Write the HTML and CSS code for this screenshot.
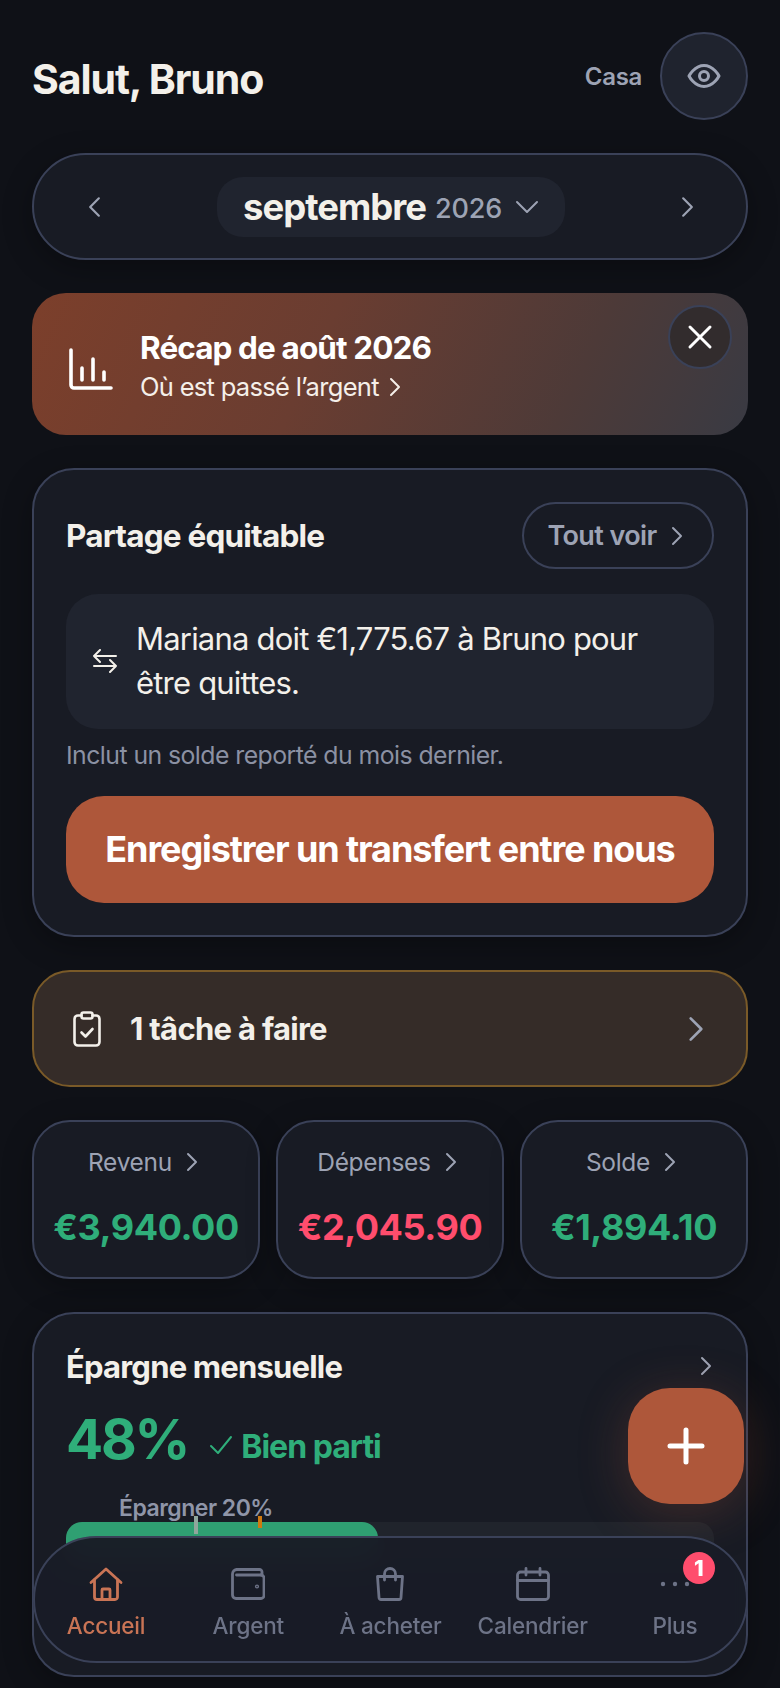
FILE: index.html
```html
<!DOCTYPE html>
<html lang="fr">
<head>
<meta charset="utf-8">
<title>Accueil</title>
<link rel="stylesheet" href="styles.css">
</head>
<body>
<svg class="defs" width="0" height="0">
  <symbol id="chev" viewBox="0 0 12 20"><path d="M2 2l8 8-8 8" fill="none" stroke="currentColor" stroke-width="2" stroke-linecap="round" stroke-linejoin="round"/></symbol>
</svg>
<main class="page">
  <header class="top">
    <h1 class="hello">Salut, Bruno</h1>
    <div class="top-right">
      <span class="casa">Casa</span>
      <button class="eye">
        <svg width="36" height="36" viewBox="0 0 24 24" fill="none" stroke="currentColor" stroke-width="2" stroke-linecap="round" stroke-linejoin="round"><path d="M2 12s3.600-7 10-7 10 7 10 7-3.600 7-10 7-10-7-10-7z"/><circle cx="12" cy="12" r="3"/></svg>
      </button>
    </div>
  </header>

  <section class="month">
    <svg class="m-chev flip"><use href="#chev"/></svg>
    <div class="m-pill">
      <span class="m-name">septembre</span>
      <span class="m-year">2026</span>
      <svg class="m-down" viewBox="0 0 24 14"><path d="M2 2l10 10L22 2" fill="none" stroke="currentColor" stroke-width="2" stroke-linecap="round" stroke-linejoin="round"/></svg>
    </div>
    <svg class="m-chev"><use href="#chev"/></svg>
  </section>

  <section class="recap">
    <svg class="recap-icon" viewBox="0 0 44 42" fill="none" stroke="currentColor" stroke-width="3.600" stroke-linecap="round" stroke-linejoin="round"><path d="M2 2v35a3 3 0 0 0 3 3h37"/><path d="M13 20v12M24 11v21M35 24v8"/></svg>
    <div class="recap-text">
      <div class="recap-title">Récap de août 2026</div>
      <div class="recap-sub">Où est passé l’argent <svg class="chev-s"><use href="#chev"/></svg></div>
    </div>
    <button class="close">
      <svg width="26" height="26" viewBox="0 0 26 26" fill="none" stroke="currentColor" stroke-width="3" stroke-linecap="round"><path d="M3 3l20 20M23 3L3 23"/></svg>
    </button>
  </section>

  <section class="card share">
    <div class="share-head">
      <h2 class="card-title">Partage équitable</h2>
      <button class="see-all">Tout voir <svg class="chev-s"><use href="#chev"/></svg></button>
    </div>
    <div class="owed">
      <svg class="owed-icon" viewBox="0 0 26 24" fill="none" stroke="currentColor" stroke-width="2" stroke-linecap="round" stroke-linejoin="round"><path d="M8 1L2 7l6 6M2 7h22M18 11l6 6-6 6M24 17H2"/></svg>
      <p class="owed-text">Mariana doit €1,775.67 à Bruno pour être quittes.</p>
    </div>
    <p class="note">Inclut un solde reporté du mois dernier.</p>
    <button class="cta">Enregistrer un transfert entre nous</button>
  </section>

  <section class="task">
    <svg class="task-icon" viewBox="0 0 28 36" fill="none" stroke="currentColor" stroke-width="2.600" stroke-linecap="round" stroke-linejoin="round"><rect x="8.500" y="1.500" width="11" height="6" rx="2"/><path d="M8.500 4.500H5a3.500 3.500 0 0 0-3.500 3.500v23A3.500 3.500 0 0 0 5 34.500h18a3.500 3.500 0 0 0 3.500-3.500V8A3.500 3.500 0 0 0 23 4.500h-3.500"/><path d="M8.500 21.500l4 4 7-7.500"/></svg>
    <span class="task-label">1 tâche à faire</span>
    <svg class="task-chev"><use href="#chev"/></svg>
  </section>

  <section class="stats">
    <div class="stat">
      <div class="stat-label">Revenu <svg class="chev-s"><use href="#chev"/></svg></div>
      <div class="stat-value green">€3,940.00</div>
    </div>
    <div class="stat">
      <div class="stat-label">Dépenses <svg class="chev-s"><use href="#chev"/></svg></div>
      <div class="stat-value red">€2,045.90</div>
    </div>
    <div class="stat">
      <div class="stat-label">Solde <svg class="chev-s"><use href="#chev"/></svg></div>
      <div class="stat-value green">€1,894.10</div>
    </div>
  </section>

  <section class="card savings">
    <div class="sav-head">
      <h2 class="card-title sav-title">Épargne mensuelle</h2>
      <svg class="chev-s"><use href="#chev"/></svg>
    </div>
    <div class="sav-main">
      <span class="sav-pct">48%</span>
      <svg class="sav-check" viewBox="0 0 24 20" fill="none" stroke="currentColor" stroke-width="2" stroke-linecap="round" stroke-linejoin="round"><path d="M2 11l7 7L22 2"/></svg>
      <span class="sav-status">Bien parti</span>
    </div>
    <div class="bar">
      <span class="goal-label">Épargner 20%</span>
      <div class="bar-fill"></div>
      <span class="mark mark-a"></span>
      <span class="mark mark-b"></span>
    </div>
  </section>
</main>

<button class="fab">
  <svg width="38" height="38" viewBox="0 0 38 38" fill="none" stroke="currentColor" stroke-width="5" stroke-linecap="round"><path d="M19 3v32M3 19h32"/></svg>
</button>

<nav class="nav">
  <a class="nav-item active">
    <svg class="nav-icon" viewBox="0 0 34 34" fill="none" stroke="currentColor" stroke-width="2.800" stroke-linecap="round" stroke-linejoin="round"><path d="M2 15.500L17 2l15 13.500"/><path d="M5.500 13v17a2.500 2.500 0 0 0 2.500 2.500h18a2.500 2.500 0 0 0 2.500-2.500V13"/><path d="M13 32v-9a1 1 0 0 1 1-1h6a1 1 0 0 1 1 1v9"/></svg>
    <span>Accueil</span>
  </a>
  <a class="nav-item">
    <svg class="nav-icon" viewBox="0 0 34 34" fill="none" stroke="currentColor" stroke-width="2.800" stroke-linecap="round" stroke-linejoin="round"><path d="M6 2.500h22.500A2.500 2.500 0 0 1 31 5v3H5.500"/><path d="M1.500 7a4.500 4.500 0 0 1 4.500-4.500M1.500 7v21a3.500 3.500 0 0 0 3.500 3.500h25a3 3 0 0 0 3-3V11a3 3 0 0 0-3-3"/><circle cx="26" cy="19.500" r=".7"/></svg>
    <span>Argent</span>
  </a>
  <a class="nav-item">
    <svg class="nav-icon" viewBox="0 0 34 34" fill="none" stroke="currentColor" stroke-width="2.800" stroke-linecap="round" stroke-linejoin="round"><path d="M4.500 9.500h25l-1.500 21a2 2 0 0 1-2 2H8a2 2 0 0 1-2-2z"/><path d="M11.500 13V7a5.500 5.500 0 0 1 11 0v6"/></svg>
    <span>À acheter</span>
  </a>
  <a class="nav-item">
    <svg class="nav-icon" viewBox="0 0 34 34" fill="none" stroke="currentColor" stroke-width="2.800" stroke-linecap="round" stroke-linejoin="round"><rect x="1.500" y="5" width="31" height="27.500" rx="3"/><path d="M1.500 13.500h31M10 1.500V8M24 1.500V8"/></svg>
    <span>Calendrier</span>
  </a>
  <a class="nav-item">
    <svg class="nav-icon" viewBox="0 0 34 34" fill="currentColor"><circle cx="5" cy="17" r="2.200"/><circle cx="17" cy="17" r="2.200"/><circle cx="29" cy="17" r="2.200"/></svg>
    <span>Plus</span>
    <b class="badge">1</b>
  </a>
</nav>
</body>
</html>
```
FILE: styles.css
```css
* { box-sizing: border-box; margin: 0; padding: 0; }
html, body { height: 100%; }
body {
  width: 780px;
  height: 1688px;
  overflow: hidden;
  background: #0f1117;
  color: #f3f0ea;
  font-family: "Inter", "Liberation Sans", sans-serif;
  position: relative;
}
.defs { position: absolute; }
button { font: inherit; color: inherit; background: none; border: 0; }
.page { padding: 32px 32px 0; display: flex; flex-direction: column; gap: 33px; }

.top { display: flex; align-items: center; justify-content: space-between; height: 88px; }
.hello { font-size: 41px; font-weight: 700; letter-spacing: -1.1px; color: #f3f0ea; margin-top: 6px; }
.top-right { display: flex; align-items: center; gap: 18px; }
.casa { font-size: 24px; font-weight: 600; color: #9da3b4; letter-spacing: -.3px; }
.eye { width: 88px; height: 88px; border-radius: 50%; background: #1f232e; border: 2px solid #3a4158; color: #9da3b4; display: flex; align-items: center; justify-content: center; }

.month { height: 107px; border-radius: 54px; background: #181b24; border: 2px solid #3a4158; display: flex; align-items: center; justify-content: space-between; padding: 0 52px 0 54px; color: #9da3b4; box-shadow: 0 8px 30px rgba(0, 0, 0, .3); }
.m-chev { width: 13px; height: 22px; }
.flip { transform: scaleX(-1); }
.m-pill { width: 348px; height: 60px; border-radius: 26px; background: #20242f; display: flex; align-items: center; justify-content: center; gap: 9px; }
.m-name { font-size: 36.500px; font-weight: 700; color: #f3f0ea; letter-spacing: -1px; }
.m-year { font-size: 27px; font-weight: 500; color: #9da3b4; letter-spacing: -.2px; margin-top: 3px; }
.m-down { width: 24px; height: 14px; margin-left: 4px; }

.recap { height: 142px; border-radius: 34px; background: linear-gradient(115deg, #7c3f2b 0%, #6a3d31 40%, #4d3a38 75%, #393a43 100%); display: flex; align-items: center; padding: 0 37px; gap: 27px; position: relative; color: #fff; }
.recap-icon { width: 44px; height: 42px; margin-top: 10px; }
.recap-text { display: flex; flex-direction: column; gap: 4px; margin-top: 4px; }
.recap-title { font-size: 31.500px; font-weight: 700; letter-spacing: -.9px; line-height: 38px; }
.recap-sub { font-size: 25.500px; letter-spacing: -.7px; line-height: 32px; display: flex; align-items: center; gap: 10px; color: #f5efe9; }
.chev-s { width: 12px; height: 20px; flex: none; }
.close { position: absolute; top: 12px; right: 16px; width: 64px; height: 64px; border-radius: 50%; background: #322c2d; border: 2px solid #3a4158; color: #fff; display: flex; align-items: center; justify-content: center; }

.card { background: #181b24; border: 2px solid #3a4158; border-radius: 42px; padding: 32px; box-shadow: 0 8px 30px rgba(0, 0, 0, .3); }
.share { height: 469px; display: flex; flex-direction: column; }
.share-head { display: flex; align-items: center; justify-content: space-between; height: 67px; }
.card-title { font-size: 31.500px; font-weight: 700; letter-spacing: -.8px; color: #f3f0ea; }
.sav-title { font-size: 31px; }
.see-all { width: 192px; height: 67px; border-radius: 34px; border: 2px solid #3a4158; color: #9da3b4; font-size: 27px; font-weight: 600; letter-spacing: -.6px; display: flex; align-items: center; justify-content: center; gap: 14px; padding-right: 6px; }
.owed { margin-top: 25px; height: 136px; border-radius: 32px; background: #20242f; display: flex; align-items: center; padding: 0 30px 0 26px; gap: 18px; }
.owed-icon { width: 26px; height: 24px; flex: none; }
.owed-text { font-size: 31px; line-height: 44px; letter-spacing: -.8px; color: #f3f0ea; }
.note { margin-top: 11px; font-size: 24.800px; line-height: 30px; letter-spacing: -.55px; color: #8b91a3; }
.cta { margin-top: 26px; height: 108px; border-radius: 38px; background: #ae573a; color: #fff; font-size: 36px; font-weight: 700; letter-spacing: -1.1px; }

.task { height: 117px; border-radius: 38px; background: #352c28; border: 2px solid #7a5a28; display: flex; align-items: center; padding: 0 42px 0 39px; }
.task-icon { width: 28px; height: 36px; }
.task-label { margin-left: 29px; font-size: 31px; font-weight: 700; letter-spacing: -.7px; flex: 1; }
.task-chev { width: 16px; height: 28px; color: #9da3b4; }

.stats { display: grid; grid-template-columns: repeat(3, 1fr); gap: 16px; }
.stat { height: 159px; border-radius: 38px; background: #181b24; border: 2px solid #3a4158; display: flex; flex-direction: column; align-items: center; padding-top: 24px; box-shadow: 0 8px 30px rgba(0, 0, 0, .3); }
.stat-label { font-size: 24.500px; line-height: 32px; color: #9da3b4; letter-spacing: -.3px; display: flex; align-items: center; gap: 14px; padding-right: 6px; }
.stat-value { margin-top: 27px; font-size: 36px; font-weight: 700; line-height: 44px; letter-spacing: -.4px; }
.green { color: #2fae7a; }
.red { color: #ff4d6d; }

.savings { height: 365px; padding-top: 33px; }
.sav-head { display: flex; align-items: center; justify-content: space-between; padding-right: 2px; color: #9da3b4; height: 38px; }
.sav-main { display: flex; align-items: center; margin-top: 19px; color: #2fae7a; height: 70px; }
.sav-pct { font-size: 55px; font-weight: 700; letter-spacing: -2.200px; }
.sav-check { width: 24px; height: 20px; margin: 12px 8px 0 21px; }
.sav-status { font-size: 32px; font-weight: 700; letter-spacing: -1px; margin-top: 14px; }
.bar { position: relative; margin-top: 48px; height: 40px; border-radius: 16px; background: #20242c; }
.bar-fill { width: 312px; height: 100%; border-radius: 16px; background: #2f9f72; }
.goal-label { position: absolute; left: 53px; top: -28px; font-size: 23px; font-weight: 600; letter-spacing: -.5px; color: #8f95a8; white-space: nowrap; }
.mark { position: absolute; top: -6px; width: 4px; height: 18px; }
.mark-a { left: 128px; background: #8fa69c; }
.mark-b { left: 192px; top: -6px; height: 12px; background: #d07a10; }

.fab { position: absolute; left: 628px; top: 1388px; width: 116px; height: 116px; border-radius: 42px; background: #ae573a; color: #fff; display: flex; align-items: center; justify-content: center; box-shadow: 0 8px 50px rgba(174, 87, 58, .28); }

.nav { position: absolute; left: 33px; top: 1536px; width: 715px; height: 127px; border-radius: 64px; background: rgba(25, 28, 38, .97); backdrop-filter: blur(12px); border: 2px solid #3a4158; display: grid; grid-template-columns: repeat(5, 1fr); }
.nav-item { position: relative; display: flex; flex-direction: column; align-items: center; padding-top: 29px; color: #6d7387; font-size: 22.500px; font-weight: 500; letter-spacing: -.2px; }
.nav-item span { margin-top: 10px; line-height: 30px; }
.nav-icon { width: 34px; height: 34px; }
.active { color: #c97455; }
.badge { position: absolute; left: 79px; top: 14px; width: 32px; height: 32px; border-radius: 50%; background: #ff4d6d; color: #fff; font-size: 22px; font-weight: 800; display: flex; align-items: center; justify-content: center; letter-spacing: 0; }
```
